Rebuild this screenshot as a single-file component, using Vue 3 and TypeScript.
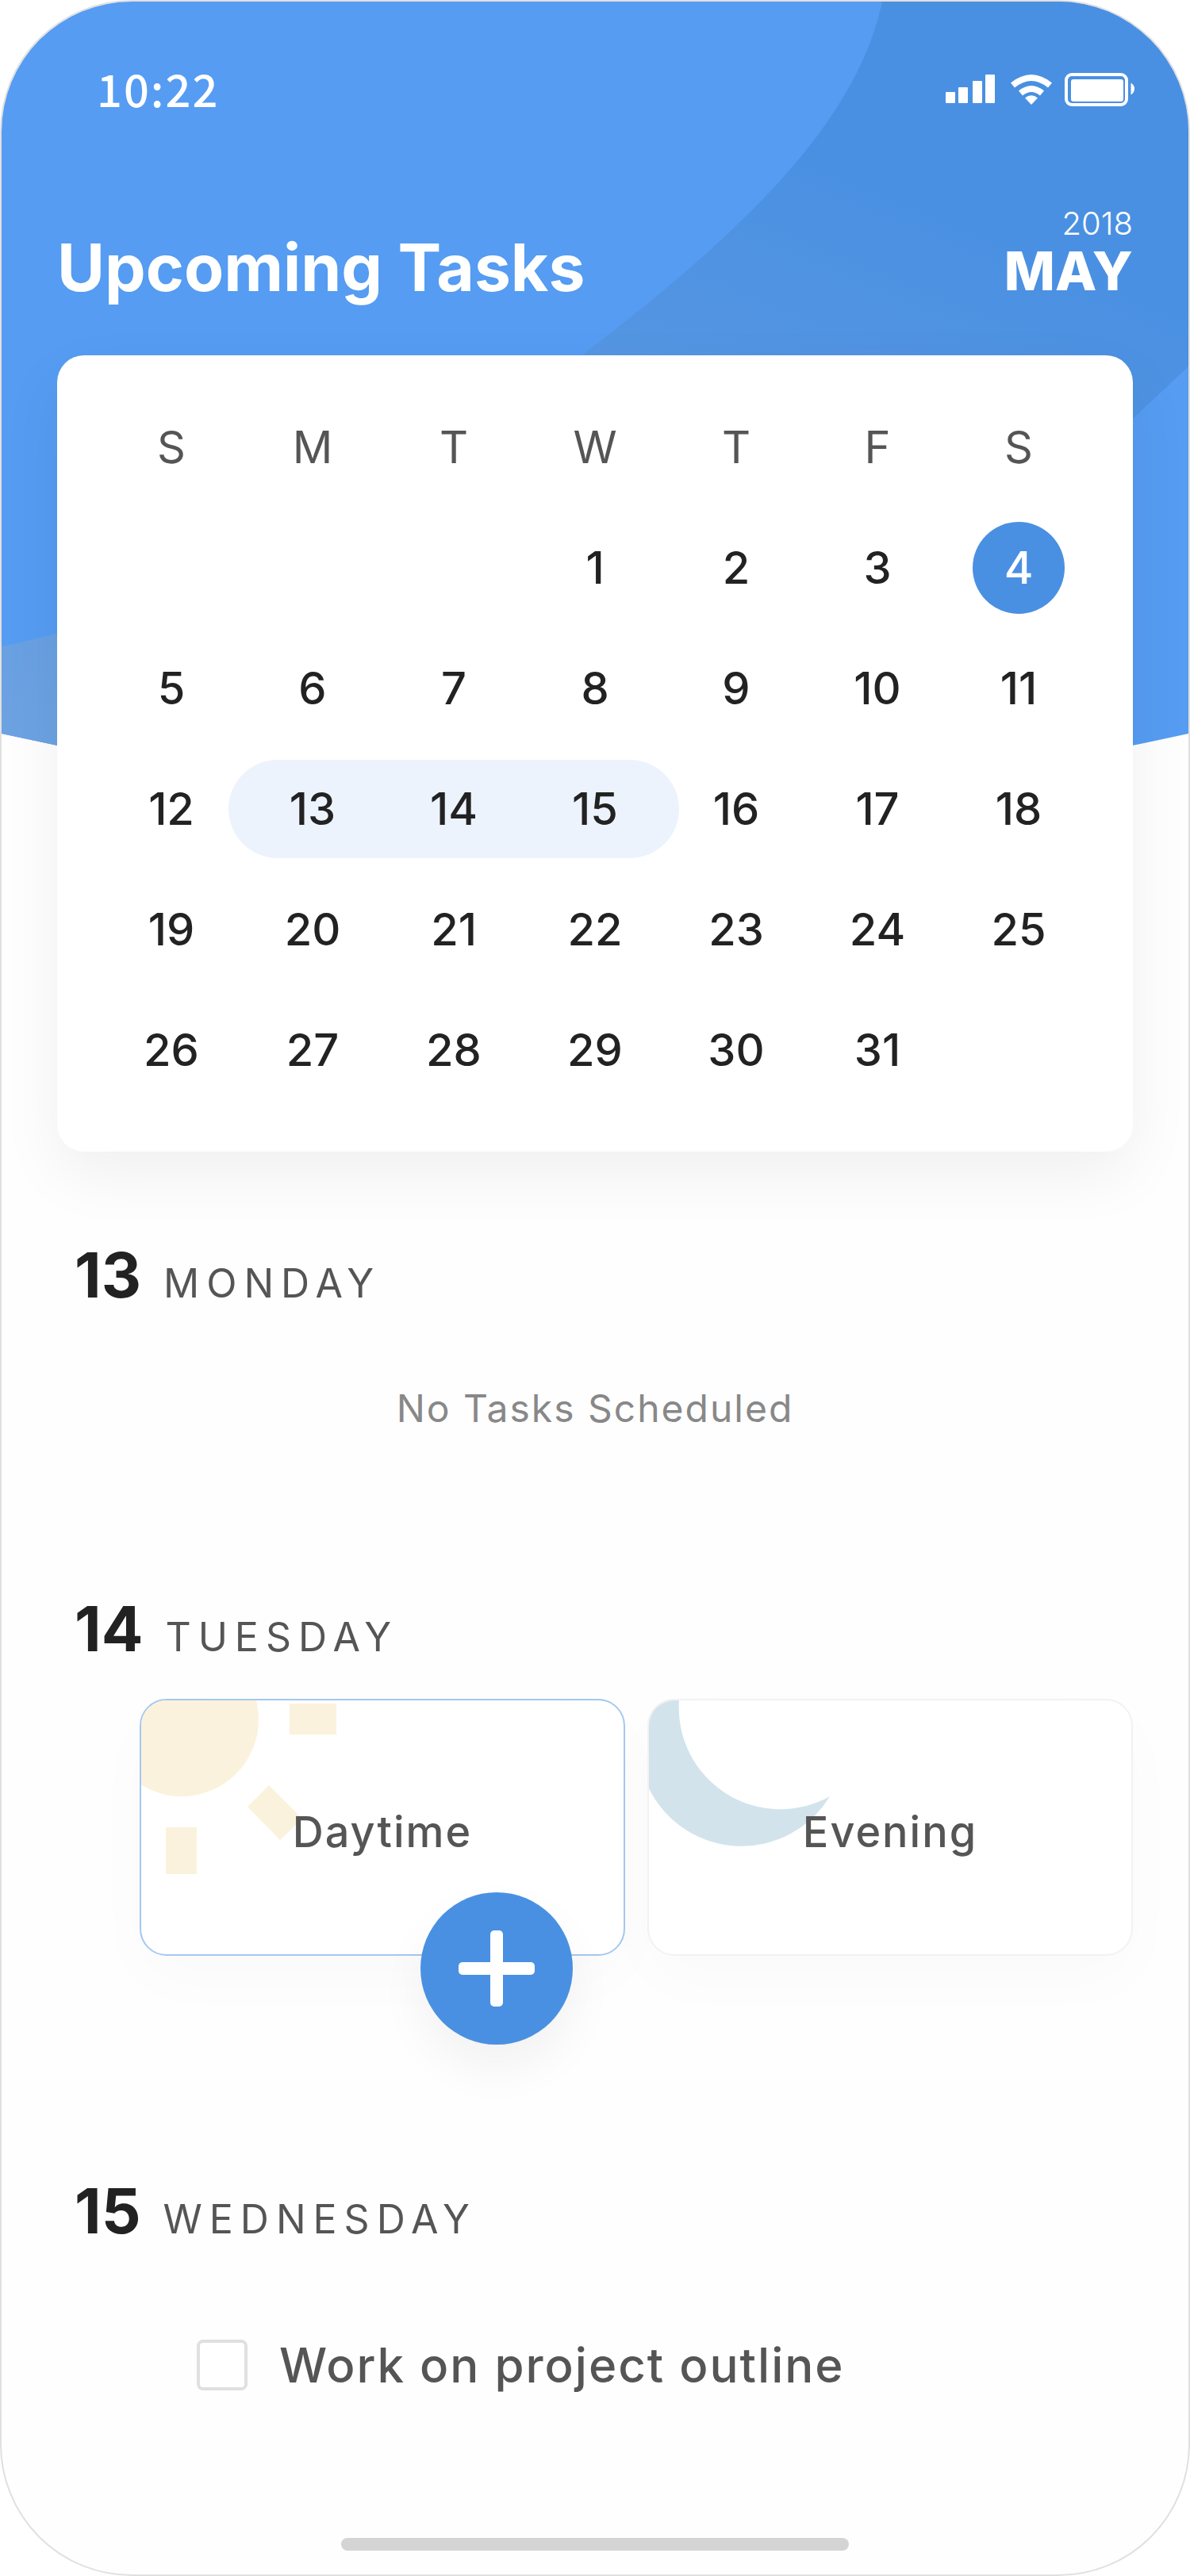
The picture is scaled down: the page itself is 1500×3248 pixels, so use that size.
<script setup lang="ts">
import { ref } from 'vue'

interface Day {
  date: number | null
  inRange: boolean
}

const weekdays = [
  { short: 'S', name: 'Sunday' },
  { short: 'M', name: 'Monday' },
  { short: 'T', name: 'Tuesday' },
  { short: 'W', name: 'Wednesday' },
  { short: 'T', name: 'Thursday' },
  { short: 'F', name: 'Friday' },
  { short: 'S', name: 'Saturday' },
]

const firstWeekday = 3
const daysInMonth = 31
const rangeStart = 13
const rangeEnd = 15

const weeks: Day[][] = Array.from({ length: 5 }, (_, week) =>
  Array.from({ length: 7 }, (_, column) => {
    const n = week * 7 + column - firstWeekday + 1
    const date = n >= 1 && n <= daysInMonth ? n : null
    return { date, inRange: n >= rangeStart && n <= rangeEnd }
  }),
)

const selected = ref(4)
const done = ref(false)
</script>

<template>
  <main class="screen">
    <svg class="backdrop" viewBox="0 0 1496 990" preserveAspectRatio="none" aria-hidden="true">
      <defs>
        <linearGradient id="band" gradientUnits="userSpaceOnUse" x1="1120" y1="230" x2="700" y2="1250">
          <stop offset="0" stop-color="#4a90e2" />
          <stop offset="1" stop-color="#6ea3e2" />
        </linearGradient>
        <clipPath id="sky">
          <path d="M0 0H1496V923Q748 1090 0 923Z" />
        </clipPath>
      </defs>
      <g clip-path="url(#sky)">
        <rect width="1496" height="990" fill="#559cf2" />
        <path
          d="M1110 0C1085 115 1000 240 748 433C520 620 260 760 0 813V990H760C1000 930 1240 720 1426 526L1496 460V0Z"
          fill="url(#band)"
        />
      </g>
    </svg>

    <div class="status">
      <time class="clock">10:22</time>
      <svg class="indicators" viewBox="0 0 240 44" role="img" aria-label="Signal, Wi-Fi and battery">
        <g fill="#fff">
          <rect x="0" y="25" width="12" height="14" rx="1" />
          <rect x="16" y="19" width="12" height="20" rx="1" />
          <rect x="34" y="11" width="12" height="28" rx="1" />
          <rect x="50" y="3" width="12" height="36" rx="1" />
          <path d="M82 13.500Q108 -7.500 134 13.500L129 19.500Q108 2.500 87 19.500Z" />
          <path d="M92 23.500Q108 10.500 124 23.500L119 29.500Q108 20.500 97 29.500Z" />
          <path d="M100 32.500Q108 26 116 32.500L108 41Z" />
          <rect x="158" y="9" width="66" height="28" rx="3" />
          <path d="M233.500 13.500Q238 16 238 21Q238 26 233.500 28.500Z" />
        </g>
        <rect x="152" y="3" width="76" height="38" rx="7" fill="none" stroke="#fff" stroke-width="4" />
      </svg>
    </div>

    <header class="title-row">
      <h1>Upcoming Tasks</h1>
      <p class="period">
        <span class="year">2018</span>
        <strong class="month">MAY</strong>
      </p>
    </header>

    <section class="calendar" aria-label="May 2018">
      <table>
        <thead>
          <tr>
            <th v-for="day in weekdays" :key="day.name" scope="col" :abbr="day.name">{{ day.short }}</th>
          </tr>
        </thead>
        <tbody>
          <tr v-for="(week, index) in weeks" :key="index">
            <td
              v-for="(day, column) in week"
              :key="column"
              :class="{
                range: day.inRange,
                'range-start': day.date === rangeStart,
                'range-end': day.date === rangeEnd,
              }"
            >
              <button
                v-if="day.date"
                type="button"
                class="date"
                :class="{ selected: day.date === selected }"
                @click="selected = day.date"
              >
                {{ day.date }}
              </button>
            </td>
          </tr>
        </tbody>
      </table>
    </section>

    <section class="agenda monday">
      <h2><span class="number">13</span><span class="weekday">MONDAY</span></h2>
      <p class="empty">No Tasks Scheduled</p>
    </section>

    <section class="agenda tuesday">
      <h2><span class="number">14</span><span class="weekday">TUESDAY</span></h2>
      <div class="slots">
        <div class="slot-wrap">
          <button type="button" class="slot active">
            <svg class="art" viewBox="0 0 260 240" aria-hidden="true">
              <g fill="#fbf2dd">
                <circle cx="51" cy="24" r="97" />
                <rect x="187" y="4" width="59" height="39" />
                <rect x="31" y="160" width="39" height="59" />
                <path d="M134 134L161 107L203 149L175 176Z" />
              </g>
            </svg>
            <span class="slot-name">Daytime</span>
          </button>
          <button type="button" class="add" aria-label="Add task">
            <svg viewBox="0 0 96 96" aria-hidden="true">
              <rect x="0" y="40" width="96" height="16" rx="5" fill="#fff" />
              <rect x="40" y="0" width="16" height="96" rx="5" fill="#fff" />
            </svg>
          </button>
        </div>
        <div class="slot-wrap">
          <button type="button" class="slot">
            <svg class="art" viewBox="0 0 260 240" aria-hidden="true">
              <path d="M0 0H38A128 128 0 0 0 228 121A130 130 0 0 1 0 111Z" fill="#d2e3ec" />
            </svg>
            <span class="slot-name">Evening</span>
          </button>
        </div>
      </div>
    </section>

    <section class="agenda wednesday">
      <h2><span class="number">15</span><span class="weekday">WEDNESDAY</span></h2>
      <label class="task">
        <input v-model="done" type="checkbox" />
        <span>Work on project outline</span>
      </label>
    </section>

    <div class="home-bar"></div>
  </main>
</template>

<style>
body {
  background: #fff;
}
</style>

<style scoped>
.screen {
  position: relative;
  display: flex;
  flex-direction: column;
  box-sizing: border-box;
  min-height: 100vh;
  padding: 81px 70px 30px;
  overflow: hidden;
  border: 2px solid #e0e0e0;
  border-radius: 166px;
  background: #fefefe;
  color: #555;
  font-family: Inter, Lato, sans-serif;
}

.backdrop {
  position: absolute;
  top: 0;
  left: 0;
  width: 100%;
  height: 990px;
}

.status,
.title-row,
.calendar,
.agenda {
  position: relative;
}

h1,
h2,
p {
  margin: 0;
}

button {
  padding: 0;
  border: 0;
  background: none;
  color: inherit;
  font: inherit;
  cursor: pointer;
}

.status {
  display: flex;
  align-items: center;
  justify-content: space-between;
  height: 60px;
  padding-left: 50px;
  color: #fff;
}

.clock {
  align-self: flex-start;
  font-family: 'Noto Sans CJK JP', sans-serif;
  font-size: 56px;
  font-weight: 500;
  line-height: 56px;
  letter-spacing: 2px;
}

.indicators {
  width: 240px;
  height: 44px;
  margin-right: -4px;
}

.title-row {
  display: flex;
  align-items: flex-end;
  justify-content: space-between;
  margin-top: 111px;
  color: #fff;
}

h1 {
  font-size: 82px;
  font-weight: 700;
  line-height: 96px;
}

.period {
  display: flex;
  flex-direction: column;
  align-items: flex-end;
  padding-bottom: 14px;
}

.year {
  font-size: 40px;
  font-weight: 300;
  line-height: 56px;
}

.month {
  font-size: 68px;
  font-weight: 800;
  line-height: 62px;
}

.calendar {
  margin-top: 62px;
  padding: 40px 55px 52px;
  border-radius: 34px;
  background: #fff;
  box-shadow: 0 30px 80px rgba(0, 0, 0, 0.06);
}

table {
  width: 100%;
  border-collapse: collapse;
  table-layout: fixed;
}

th,
td {
  height: 152px;
  padding: 0;
  font-size: 56px;
  line-height: 72px;
  text-align: center;
  vertical-align: middle;
}

th {
  font-weight: 400;
}

td {
  position: relative;
  color: #222;
  font-weight: 500;
}

.range::before {
  position: absolute;
  top: 14px;
  right: 0;
  bottom: 14px;
  left: 0;
  background: #edf3fc;
  content: '';
}

.range-start::before {
  left: -17px;
  border-radius: 62px 0 0 62px;
}

.range-end::before {
  right: -17px;
  border-radius: 0 62px 62px 0;
}

.date {
  position: relative;
  display: block;
  width: 116px;
  height: 116px;
  margin: 0 auto;
  border-radius: 50%;
}

.date.selected {
  background: #4a90e2;
  color: #fff;
}

h2 {
  display: flex;
  align-items: baseline;
  gap: 28px;
  height: 96px;
  padding-left: 22px;
  line-height: 100px;
}

.number {
  color: #222;
  font-size: 78px;
  font-weight: 700;
}

.weekday {
  font-size: 50px;
  font-weight: 400;
  letter-spacing: 9px;
}

.monday {
  margin-top: 106px;
}

.empty {
  margin-top: 92px;
  color: #888;
  font-size: 48px;
  line-height: 60px;
  letter-spacing: 2px;
  text-align: center;
}

.tuesday {
  margin-top: 198px;
}

.slots {
  display: flex;
  gap: 28px;
  margin-top: 42px;
  padding-left: 104px;
}

.slot-wrap {
  position: relative;
  flex: 1;
}

.slot {
  position: relative;
  display: flex;
  align-items: center;
  justify-content: center;
  box-sizing: border-box;
  width: 100%;
  height: 324px;
  padding-top: 12px;
  overflow: hidden;
  border: 2px solid #f2f2f2;
  border-radius: 34px;
  background: #fff;
  box-shadow: 0 30px 80px rgba(0, 0, 0, 0.02);
}

.slot.active {
  border-color: #a4c8f1;
}

.art {
  position: absolute;
  top: 0;
  left: 0;
  width: 260px;
  height: 240px;
}

.slot-name {
  position: relative;
  font-size: 54px;
  font-weight: 500;
  line-height: 64px;
  letter-spacing: 2px;
}

.add {
  position: absolute;
  right: 66px;
  bottom: -112px;
  z-index: 1;
  display: flex;
  align-items: center;
  justify-content: center;
  width: 192px;
  height: 192px;
  border-radius: 50%;
  background: #4a90e2;
  box-shadow: 0 30px 60px rgba(0, 0, 0, 0.05);
}

.add svg {
  width: 96px;
  height: 96px;
}

.wednesday {
  margin-top: 272px;
}

.task {
  display: flex;
  align-items: center;
  gap: 40px;
  width: fit-content;
  margin-top: 112px;
  padding-left: 176px;
  font-size: 60px;
  font-weight: 500;
  line-height: 72px;
  letter-spacing: 2px;
}

.task input {
  box-sizing: border-box;
  width: 64px;
  height: 64px;
  margin: 0;
  border: 4px solid #e0e0e0;
  border-radius: 8px;
  background: #fff;
  appearance: none;
}

.task input:checked {
  border-color: #4a90e2;
  background: #4a90e2;
}

.home-bar {
  align-self: center;
  width: 640px;
  max-width: 100%;
  height: 16px;
  margin-top: auto;
  border-radius: 8px;
  background: #d4d4d4;
}
</style>
